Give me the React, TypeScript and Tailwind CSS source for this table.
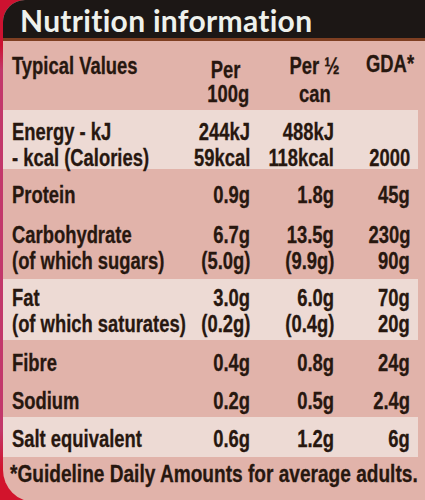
import React from "react"

type Cells = [string, string, string, string]

type Row = {
  lines: Cells[]
  light?: boolean
  cls: string
}

// label rows, top to bottom
const ROWS: Row[] = [
  {
    cls: "h-[59px] pt-[9px]",
    light: true,
    lines: [
      ["Energy - kJ", "244kJ", "488kJ", ""],
      ["- kcal (Calories)", "59kcal", "118kcal", "2000"],
    ],
  },
  { cls: "h-[46px] pt-[13px]", lines: [["Protein", "0.9g", "1.8g", "45g"]] },
  {
    cls: "h-[64px] pt-[7px]",
    lines: [
      ["Carbohydrate", "6.7g", "13.5g", "230g"],
      ["(of which sugars)", "(5.0g)", "(9.9g)", "90g"],
    ],
  },
  {
    cls: "h-[61px] pt-[6px]",
    light: true,
    lines: [
      ["Fat", "3.0g", "6.0g", "70g"],
      ["(of which saturates)", "(0.2g)", "(0.4g)", "20g"],
    ],
  },
  { cls: "h-[40px] pt-[10px]", lines: [["Fibre", "0.4g", "0.8g", "24g"]] },
  { cls: "h-[37px] pt-[8px]", lines: [["Sodium", "0.2g", "0.5g", "2.4g"]] },
  { cls: "h-[40px] pt-[9px]", light: true, lines: [["Salt equivalent", "0.6g", "1.2g", "6g"]] },
]

// condensed look: Liberation Sans Bold squeezed to narrow widths
function N({ children, o = "left" }: { children: React.ReactNode; o?: "left" | "right" | "center" }) {
  const origin = o === "left" ? "origin-left" : o === "right" ? "origin-right" : "origin-center"
  return <span className={`inline-block scale-x-[0.8] ${origin}`}>{children}</span>
}

const GRID = "grid grid-cols-[150px_88px_84px_76px] items-center whitespace-nowrap"

function Line({ cells }: { cells: Cells }) {
  return (
    <div className={`${GRID} h-[26px]`}>
      <span>
        <N>{cells[0]}</N>
      </span>
      <span className="text-right">
        <N o="right">{cells[1]}</N>
      </span>
      <span className="text-right">
        <N o="right">{cells[2]}</N>
      </span>
      <span className="text-right">
        <N o="right">{cells[3]}</N>
      </span>
    </div>
  )
}

export default function App() {
  return (
    <div className="h-[500px] w-[425px] overflow-hidden bg-[linear-gradient(180deg,#cc1230_0px,#cc1230_45px,#c2386a_70px,#c2386a_430px,#d2142c_470px)]">
      <div className="ml-[3px] flex h-[502px] flex-col overflow-hidden rounded-tl-[22px] rounded-bl-[32px] bg-[#e1b3aa] text-[23px] font-bold leading-none text-[#27170f] [-webkit-text-stroke:0.3px_#27170f] [font-family:'Liberation_Sans',Arial,sans-serif]">
        {/* header bar */}
        <div className="flex h-[41px] shrink-0 items-center border-b-[3px] border-[#7e3f22] bg-[#1c1715] pl-[17px] pt-[2px] [-webkit-text-stroke:0px]">
          <span className="text-[30px] font-bold tracking-[0.3px] text-[#eef1ec] [font-family:Lato,sans-serif]">
            Nutrition information
          </span>
        </div>

        {/* column heads */}
        <div className="h-[69px] shrink-0 pl-[9px] pt-[11px]">
          <div className={`${GRID} h-[28px]`}>
            <span>
              <N>Typical Values</N>
            </span>
            <span className="relative top-[4px] pl-[40px] text-center">
              <N o="center">Per</N>
            </span>
            <span className="-mr-[6px] text-right">
              <N o="right">Per ½</N>
            </span>
            <span className="relative top-[-2px] -mr-[4px] text-right">
              <N o="right">GDA*</N>
            </span>
          </div>
          <div className={`${GRID} h-[28px]`}>
            <span />
            <span className="pl-[40px] text-center">
              <N o="center">100g</N>
            </span>
            <span className="pr-[3px] text-right">
              <N o="right">can</N>
            </span>
            <span />
          </div>
        </div>

        {ROWS.map((r, i) => (
          <div
            key={i}
            className={`shrink-0 pl-[9px] ${r.cls} ${r.light ? "mr-[7px] bg-[#eddad4]" : ""}`}
          >
            {r.lines.map((l, j) => (
              <Line key={j} cells={l} />
            ))}
          </div>
        ))}

        <div className="flex h-[26px] shrink-0 items-center whitespace-nowrap pl-[7px] pt-[8px]">
          <span className="inline-block origin-left scale-x-[0.83]">
            *Guideline Daily Amounts for average adults.
          </span>
        </div>
      </div>
    </div>
  )
}
